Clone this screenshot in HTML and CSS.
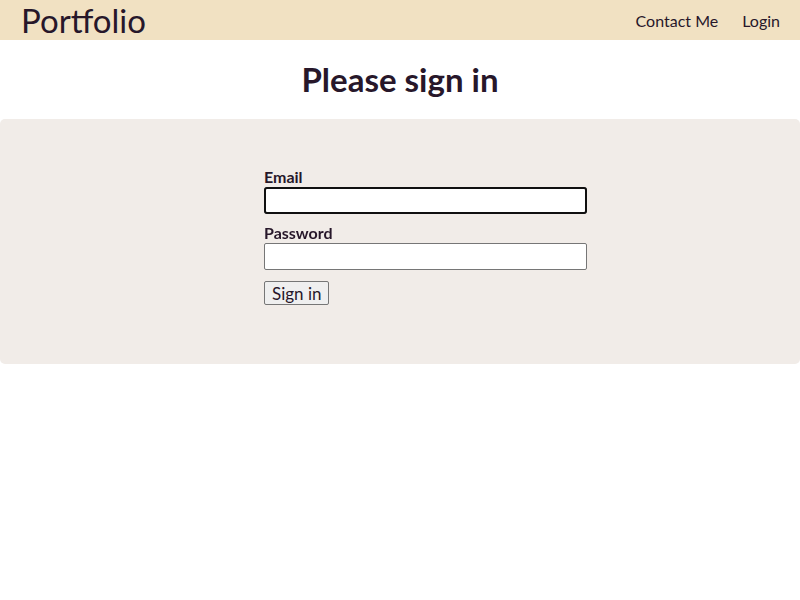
FILE: index.html
```html
<!DOCTYPE html>
<html>
<head>
<meta charset="utf-8">
<link rel="stylesheet" href="styles.css">
</head>
<body>
<nav class="navbar">
  <a class="brand" href="#">Portfolio</a>
  <div class="links">
    <a href="#">Contact Me</a>
    <a href="#">Login</a>
  </div>
</nav>
<h1 class="title">Please sign in</h1>
<section class="panel">
  <form class="form">
    <label for="email">Email</label>
    <input id="email" type="email" autofocus>
    <label for="password">Password</label>
    <input id="password" type="password">
    <div><button type="button">Sign in</button></div>
  </form>
</section>
</body>
</html>
```
FILE: styles.css
```css
body {
  margin: 0;
  font-family: Lato, sans-serif;
  color: #27172a;
}
.navbar {
  height: 40px;
  background: #f1e1c2;
  display: flex;
  align-items: center;
  justify-content: space-between;
  padding: 0 20px 0 21px;
}
.navbar a {
  color: #27172a;
  text-decoration: none;
}
.brand {
  font-size: 33px;
  line-height: 40px;
}
.links {
  display: flex;
  gap: 24px;
  font-size: 16px;
}
.title {
  margin: 0;
  height: 79px;
  line-height: 79px;
  text-align: center;
  font-size: 33px;
  font-weight: 700;
}
.panel {
  background: #f1ece8;
  border-radius: 5px;
  height: 245px;
  box-sizing: border-box;
  padding: 48px 0 0 51px;
  display: flex;
  justify-content: center;
}
.form {
  width: 323px;
  display: flex;
  flex-direction: column;
}
label {
  font-weight: 700;
  font-size: 16px;
  line-height: 20px;
}
input {
  height: 27px;
  box-sizing: border-box;
  margin: 0 0 9px;
  border: 1px solid #767676;
  border-radius: 2px;
}
input:focus {
  outline: 2px solid #101010;
  outline-offset: -2px;
  border-radius: 3px;
}
button {
  margin-top: 2px;
  font-family: inherit;
  font-size: 17px;
  color: #27172a;
  padding: 0 7px;
  height: 24px;
  border: 1px solid #767676;
  border-radius: 2px;
  background: #efefef;
}
```
